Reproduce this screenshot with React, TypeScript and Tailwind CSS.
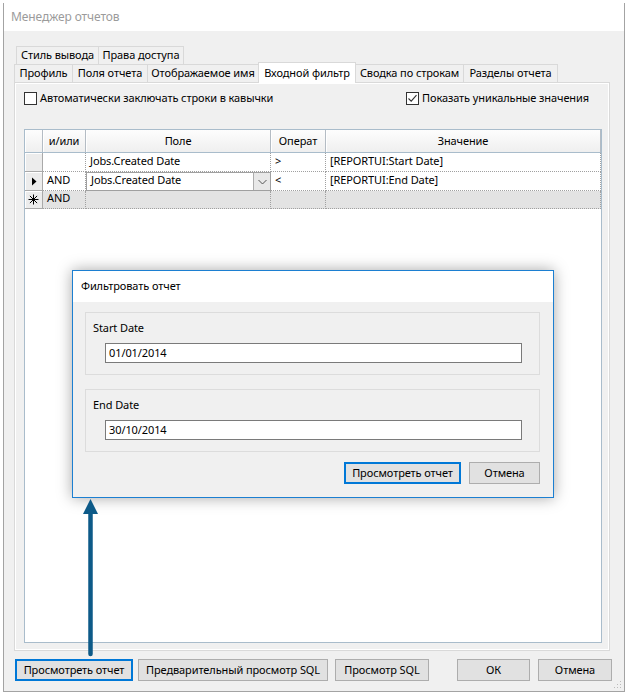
import React from "react";

function Check({ checked }: { checked?: boolean }) {
  return (
    <span className="w-[13px] h-[13px] border border-[#333] bg-white flex items-center justify-center shrink-0">
      {checked && (
        <svg width="11" height="11" viewBox="0 0 11 11">
          <path d="M1.5 5.5 L4.2 8.2 L9.5 2.2" fill="none" stroke="#333" strokeWidth="1.1" />
        </svg>
      )}
    </span>
  );
}

function WinButton({ label, w, focused }: { label: string; w: number; focused?: boolean }) {
  return (
    <div
      style={{ width: w }}
      className={`h-[22px] flex items-center justify-center whitespace-nowrap bg-[#e1e1e1] ${
        focused ? "border-2 border-[#0078d7]" : "border border-[#adadad]"
      }`}
    >
      {label}
    </div>
  );
}

function Group({ label, value }: { label: string; value: string }) {
  return (
    <div className="w-[455px] h-[63px] border border-[#dcdcdc] pl-[7px] pt-[7px]">
      <div className="h-[16px] leading-[16px]">{label}</div>
      <div className="mt-[7px] ml-[12px] w-[417px] h-[20px] border border-[#7a7a7a] bg-white pl-[3px] leading-[18px]">
        {value}
      </div>
    </div>
  );
}

function Tab({ label, w, active, first }: { label: string; w: number; active?: boolean; first?: boolean }) {
  return (
    <div
      style={{ width: w }}
      className={`${first ? "" : "-ml-px"} ${
        active ? "relative z-10 h-[21px] -mb-px bg-white" : "h-[18px]"
      } border border-b-0 border-[#d9d9d9] flex items-center justify-center whitespace-nowrap`}
    >
      {label}
    </div>
  );
}

// ячейка заголовка таблицы
function HeadCell({ w, children }: { w?: number; children?: React.ReactNode }) {
  return (
    <div
      style={w ? { width: w } : undefined}
      className={`${w ? "" : "flex-1"} h-full flex items-center justify-center bg-linear-to-b from-[#fdfdfd] to-[#efefef] border-r border-[#b4bcc4] shadow-[inset_1px_0_0_#fff]`}
    >
      {children}
    </div>
  );
}

function RowHead({ children }: { children?: React.ReactNode }) {
  return (
    <div className="w-[18px] h-full flex items-center justify-center bg-[#ececec] border-r border-b border-[#a9a9a9] shadow-[inset_1px_1px_0_#fff]">
      {children}
    </div>
  );
}

function Cell({ w, children }: { w?: number; children?: React.ReactNode }) {
  return (
    <div
      style={w ? { width: w } : undefined}
      className={`${w ? "" : "flex-1"} h-full flex items-center pl-[4px] pb-[2px] border-r border-b border-dotted border-[#a0a0a0] whitespace-nowrap`}
    >
      {children}
    </div>
  );
}

export default function App() {
  return (
    <div className="relative w-[627px] h-[696px] bg-white overflow-hidden font-['Noto_Sans',sans-serif] text-[11px] tracking-[-0.1px] text-black">
      {/* окно менеджера */}
      <div className="relative mt-[3px] ml-[3px] w-[622px] h-[689px] border-x border-b border-[#a3a3a3] flex flex-col bg-[#f0f0f0]">
        <div className="h-[28px] bg-white pl-[7px] flex items-center text-[12px] text-[#9b9b9b]">Менеджер отчетов</div>

        <div className="flex-1 flex flex-col pl-[10px] pt-[15px]">
          {/* вкладки */}
          <div className="flex h-[18px] ml-[2px]">
            <Tab label="Стиль вывода" w={83} first />
            <Tab label="Права доступа" w={86} />
          </div>
          <div className="flex items-end h-[18px]">
            <Tab label="Профиль" w={59} first />
            <Tab label="Поля отчета" w={76} />
            <Tab label="Отображаемое имя" w={112} />
            <Tab label="Входной фильтр" w={98} active />
            <Tab label="Сводка по строкам" w={109} />
            <Tab label="Разделы отчета" w={95} />
          </div>

          {/* панель вкладки */}
          <div className="w-[596px] h-[569px] border border-[#d9d9d9] bg-[#f0f0f0]">
            <div className="h-full border border-white pl-[8px] pt-[8px] flex flex-col">
              <div className="flex items-center h-[13px]">
                <div className="w-[382px] flex items-center gap-[3px]">
                  <Check />
                  <span>Автоматически заключать строки в кавычки</span>
                </div>
                <div className="flex items-center gap-[3px]">
                  <Check checked />
                  <span>Показать уникальные значения</span>
                </div>
              </div>

              {/* таблица фильтров */}
              <div className="mt-[24px] w-[578px] h-[514px] border border-[#a9bccb] bg-white flex flex-col">
                <div className="h-[23px] flex border-b border-[#a9bccb]">
                  <HeadCell w={18} />
                  <HeadCell w={43}>и/или</HeadCell>
                  <HeadCell w={185}>Поле</HeadCell>
                  <HeadCell w={55}>Операт</HeadCell>
                  <HeadCell>Значение</HeadCell>
                </div>
                <div className="h-[19px] flex">
                  <RowHead />
                  <Cell w={43} />
                  <Cell w={185}>Jobs.Created Date</Cell>
                  <Cell w={55}>&gt;</Cell>
                  <Cell>[REPORTUI:Start Date]</Cell>
                </div>
                <div className="h-[19px] flex">
                  <RowHead>
                    <svg width="6" height="9" viewBox="0 0 6 9">
                      <path d="M1 0.5 L5.5 4.5 L1 8.5 Z" fill="#000" />
                    </svg>
                  </RowHead>
                  <Cell w={43}>AND</Cell>
                  <div className="w-[185px] h-full flex border border-[#a0a0a0] bg-white">
                    <div className="flex-1 pl-[4px] pb-[2px] flex items-center">Jobs.Created Date</div>
                    <div className="w-[17px] h-full bg-[#e8e8e8] border-l border-[#adadad] flex items-center justify-center">
                      <svg width="9" height="6" viewBox="0 0 9 6">
                        <path d="M0.5 1 L4.5 5 L8.5 1" fill="none" stroke="#555" strokeWidth="1" />
                      </svg>
                    </div>
                  </div>
                  <Cell w={55}>&lt;</Cell>
                  <Cell>[REPORTUI:End Date]</Cell>
                </div>
                <div className="h-[18px] flex bg-[#e3e3e3]">
                  <RowHead>
                    <svg width="11" height="11" viewBox="0 0 11 11">
                      <path d="M5.5 0.5 V10.5 M0.5 5.5 H10.5 M1.9 1.9 L9.1 9.1 M9.1 1.9 L1.9 9.1" stroke="#000" strokeWidth="1" />
                    </svg>
                  </RowHead>
                  <Cell w={43}>AND</Cell>
                  <Cell w={185} />
                  <Cell w={55} />
                  <Cell />
                </div>
              </div>
            </div>
          </div>

          {/* кнопки внизу */}
          <div className="flex mt-[8px] ml-px">
            <WinButton label="Просмотреть отчет" w={118} focused />
            <div className="ml-[5px]">
              <WinButton label="Предварительный просмотр SQL" w={190} />
            </div>
            <div className="ml-[7px]">
              <WinButton label="Просмотр SQL" w={94} />
            </div>
            <div className="ml-[28px]">
              <WinButton label="ОК" w={73} />
            </div>
            <div className="ml-[8px]">
              <WinButton label="Отмена" w={74} />
            </div>
          </div>
        </div>

        <svg className="absolute right-[2px] bottom-[2px]" width="9" height="9" viewBox="0 0 9 9">
          <rect x="7" y="1" width="1" height="1" fill="#bbb" />
          <rect x="4" y="4" width="1" height="1" fill="#bbb" />
          <rect x="7" y="4" width="1" height="1" fill="#bbb" />
          <rect x="1" y="7" width="1" height="1" fill="#bbb" />
          <rect x="4" y="7" width="1" height="1" fill="#bbb" />
          <rect x="7" y="7" width="1" height="1" fill="#bbb" />
        </svg>
      </div>

      {/* диалог фильтра */}
      <div className="absolute left-[72px] top-[270px] w-[482px] h-[228px] border border-[#1c7fd1] bg-[#f0f0f0] shadow-[0_0_14px_rgba(0,0,0,0.35)] flex flex-col">
        <div className="h-[31px] bg-white pl-[8px] flex items-center">Фильтровать отчет</div>
        <div className="pl-[12px] pt-[10px] flex flex-col">
          <Group label="Start Date" value="01/01/2014" />
          <div className="mt-[14px]">
            <Group label="End Date" value="30/10/2014" />
          </div>
          <div className="w-[455px] mt-[10px] flex justify-end gap-[8px]">
            <WinButton label="Просмотреть отчет" w={117} focused />
            <WinButton label="Отмена" w={71} />
          </div>
        </div>
      </div>

      {/* стрелка */}
      <svg className="absolute left-[81px] top-[497px]" width="20" height="162" viewBox="0 0 20 162">
        <line x1="9.5" y1="14" x2="9.5" y2="157" stroke="#0d5a88" strokeWidth="4.5" strokeLinecap="round" />
        <path d="M9.5 2 L2 17 L17 17 Z" fill="#0d5a88" />
      </svg>
    </div>
  );
}
